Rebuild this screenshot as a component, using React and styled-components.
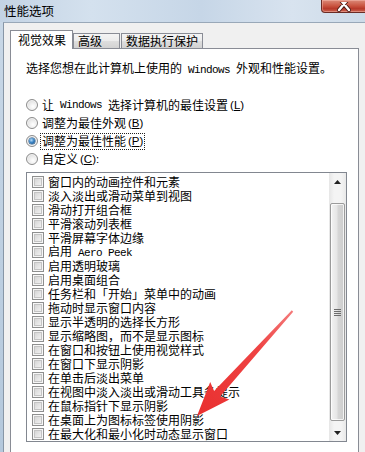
import React from 'react';
import styled, { createGlobalStyle } from 'styled-components';

const CJK = `"Noto Sans CJK SC", "Noto Sans", sans-serif`;

const GlobalStyle = createGlobalStyle`
  html, body { margin: 0; padding: 0; }
  body {
    width: 365px; height: 452px; overflow: hidden;
    background: #f0f0f0; color: #000;
    font-family: ${CJK};
  }
  #root { width: 365px; height: 452px; }
`;

const Window = styled.div`
  position: relative;
  width: 365px;
  height: 452px;
  display: flex;
  flex-direction: column;
  overflow: hidden;
  background: linear-gradient(180deg, #c9d8e7 0%, #b4c8dc 100%);
`;

const TitleBar = styled.div`
  flex: none;
  height: 22px;
  display: flex;
  justify-content: space-between;
  align-items: flex-start;
  background: linear-gradient(90deg, #c3d3e4 0%, #d4e1ee 25%, #c6d6e7 55%, #d8e3ef 80%, #cddbe8 100%);
`;

const Title = styled.div`
  padding-left: 4px;
  font-size: 12.5px;
  line-height: 21px;
  white-space: nowrap;
`;

const CloseButton = styled.div`
  box-sizing: border-box;
  width: 46px;
  height: 13px;
  margin-right: -2px;
  border: 1px solid #6b2c25;
  border-top: none;
  border-radius: 0 0 0 4px;
  background: linear-gradient(180deg, #dc8a78 0%, #c9533f 50%, #b7392a 72%, #cc6652 100%);
  box-shadow: inset 0 0 0 1px rgba(255, 205, 195, 0.4);
  display: flex;
  justify-content: center;
  align-items: flex-end;
`;

const Body = styled.div`
  flex: 1;
  min-height: 0;
  margin-left: 3px;
  border-left: 1px solid #8796a6;
  border-top: 1px solid #99a8b8;
  background: #f0f0f0;
  padding: 7px 6px 0 6px;
  display: flex;
  flex-direction: column;
`;

const TabStrip = styled.div`
  position: relative;
  z-index: 1;
  height: 19px;
  margin-bottom: -1px;
  display: flex;
  align-items: flex-end;
`;

const Tab = styled.div`
  box-sizing: border-box;
  width: ${(p) => p.$w}px;
  height: ${(p) => (p.$active ? 19 : 15)}px;
  margin-bottom: ${(p) => (p.$active ? 0 : 1)}px;
  margin-left: ${(p) => p.$ml || 0}px;
  border: 1px solid #898c95;
  border-bottom: none;
  background: ${(p) =>
    p.$active
      ? '#ffffff'
      : 'linear-gradient(180deg, #f4f4f4 0%, #ececec 48%, #dedede 52%, #d2d2d2 100%)'};
  padding-left: ${(p) => (p.$active ? 7 : 4)}px;
  padding-top: ${(p) => (p.$active ? 2 : 0)}px;
  font-size: 12px;
  line-height: 14px;
  white-space: nowrap;
`;

const Panel = styled.div`
  position: relative;
  z-index: 0;
  flex: 1;
  min-height: 0;
  background: #ffffff;
  border: 1px solid #898c95;
  border-bottom: none;
  padding: 12px 0 0 15px;
  display: flex;
  flex-direction: column;
`;

const Intro = styled.div`
  height: 14px;
  font-size: 12px;
  line-height: 14px;
  white-space: nowrap;
`;

const RadioGroup = styled.div`
  margin-top: 21px;
  display: flex;
  flex-direction: column;
`;

const RadioRow = styled.div`
  height: 18px;
  display: flex;
  align-items: center;
  gap: 4px;
  font-size: 12px;
  line-height: 14px;
  white-space: nowrap;
`;

const RadioCircle = styled.span`
  box-sizing: border-box;
  flex: none;
  width: 12px;
  height: 12px;
  border-radius: 50%;
  border: 1px solid #8c8c8c;
  background: radial-gradient(circle at 60% 65%, #ffffff 0%, #eeeeee 40%, #cfcfcf 100%);
  box-shadow: inset 0 0 0 1px #f4f4f4;
  display: flex;
  align-items: center;
  justify-content: center;
`;

const RadioDot = styled.span`
  width: 6px;
  height: 6px;
  border-radius: 50%;
  background: radial-gradient(circle at 40% 35%, #b9dcf7 0%, #3d86c6 45%, #0f3f72 100%);
  box-shadow: 0 0 0 0.5px #1b4f80;
`;

const Label = styled.span`
  display: inline-flex;
  align-items: center;
  height: 15px;
  outline: ${(p) => (p.$focus ? '1px dotted #222' : 'none')};
  padding: 0 ${(p) => (p.$focus ? 1 : 0)}px;
  margin-left: ${(p) => (p.$focus ? -1 : 0)}px;
`;

const Mono = styled.span`
  font-family: "Liberation Mono", "DejaVu Sans Mono", monospace;
  font-size: 11px;
  letter-spacing: -0.6px;
  white-space: pre;
`;

const Key = styled.span`
  font-family: "Liberation Sans", "Noto Sans", sans-serif;
  font-size: 11.5px;
  margin-left: 2px;
  u { text-underline-offset: 1px; }
`;

const ListBox = styled.div`
  box-sizing: border-box;
  margin-top: 4px;
  width: 321px;
  height: 270px;
  border: 1px solid #828790;
  display: flex;
  overflow: hidden;
`;

const Items = styled.div`
  flex: 1;
  padding: 2px 0 0 5px;
  display: flex;
  flex-direction: column;
`;

const CheckRow = styled.div`
  height: 14px;
  flex: none;
  display: flex;
  align-items: center;
  gap: 4px;
  font-size: 12px;
  line-height: 14px;
  white-space: nowrap;
`;

const CheckBox = styled.span`
  box-sizing: border-box;
  flex: none;
  width: 12px;
  height: 12px;
  border: 1px solid #8e8f8f;
  background: linear-gradient(135deg, #cdcdcd 0%, #e6e6e6 55%, #f8f8f8 100%);
  box-shadow: inset 0 0 0 1px #f6f6f6, inset 0 0 0 2px #c4c4c4;
`;

const ScrollBar = styled.div`
  flex: none;
  width: 17px;
  display: flex;
  flex-direction: column;
  background: linear-gradient(90deg, #e6e6e6 0%, #f4f4f4 30%, #f4f4f4 70%, #e9e9e9 100%);
`;

const ScrollArrow = styled.div`
  height: 17px;
  flex: none;
  display: flex;
  align-items: center;
  justify-content: center;
`;

const Track = styled.div`
  flex: 1;
  padding: 13px 1px 3px 1px;
  display: flex;
`;

const Thumb = styled.div`
  flex: 1;
  border: 1px solid #9b9b9b;
  border-radius: 2px;
  background: linear-gradient(90deg, #f3f3f3 0%, #e6e6e6 45%, #d6d6d6 55%, #cdcdcd 100%);
  box-shadow: inset 0 0 0 1px rgba(255, 255, 255, 0.75);
  display: flex;
  align-items: center;
  justify-content: center;
`;

const Overlay = styled.svg`
  position: absolute;
  left: 0;
  top: 0;
  width: 365px;
  height: 452px;
  pointer-events: none;
`;

const renderText = (s) =>
  s.split(/( ?[A-Za-z][A-Za-z ]*[A-Za-z] ?)/).map((part, i) =>
    /[A-Za-z]/.test(part) ? <Mono key={i}>{part}</Mono> : <React.Fragment key={i}>{part}</React.Fragment>
  );

const radios = [
  { text: '让 Windows 选择计算机的最佳设置', key: 'L' },
  { text: '调整为最佳外观', key: 'B' },
  { text: '调整为最佳性能', key: 'P', checked: true },
  { text: '自定义', key: 'C', colon: true },
];

const items = [
  '窗口内的动画控件和元素',
  '淡入淡出或滑动菜单到视图',
  '滑动打开组合框',
  '平滑滚动列表框',
  '平滑屏幕字体边缘',
  '启用 Aero Peek',
  '启用透明玻璃',
  '启用桌面组合',
  '任务栏和「开始」菜单中的动画',
  '拖动时显示窗口内容',
  '显示半透明的选择长方形',
  '显示缩略图，而不是显示图标',
  '在窗口和按钮上使用视觉样式',
  '在窗口下显示阴影',
  '在单击后淡出菜单',
  '在视图中淡入淡出或滑动工具条提示',
  '在鼠标指针下显示阴影',
  '在桌面上为图标标签使用阴影',
  '在最大化和最小化时动态显示窗口',
];

export default function App() {
  return (
    <>
      <GlobalStyle />
      <Window>
        <TitleBar>
          <Title>性能选项</Title>
          <CloseButton>
            <svg width="14" height="10" viewBox="0 0 14 10">
              <path d="M2 -4 L12 8 M12 -4 L2 8" stroke="#4a1a14" strokeWidth="4.2" strokeLinecap="round" />
              <path d="M2 -4 L12 8 M12 -4 L2 8" stroke="#ffffff" strokeWidth="2.4" strokeLinecap="round" />
            </svg>
          </CloseButton>
        </TitleBar>
        <Body>
          <TabStrip>
            <Tab $active $w={63}>视觉效果</Tab>
            <Tab $w={47}>高级</Tab>
            <Tab $w={82} $ml={1}>数据执行保护</Tab>
          </TabStrip>
          <Panel>
            <Intro>{renderText('选择您想在此计算机上使用的 Windows 外观和性能设置。')}</Intro>
            <RadioGroup>
              {radios.map((r) => (
                <RadioRow key={r.key}>
                  <RadioCircle>{r.checked && <RadioDot />}</RadioCircle>
                  <Label $focus={r.checked}>
                    {renderText(r.text)}
                    <Key>
                      (<u>{r.key}</u>){r.colon ? ':' : ''}
                    </Key>
                  </Label>
                </RadioRow>
              ))}
            </RadioGroup>
            <ListBox>
              <Items>
                {items.map((t) => (
                  <CheckRow key={t}>
                    <CheckBox />
                    <span>{renderText(t)}</span>
                  </CheckRow>
                ))}
              </Items>
              <ScrollBar>
                <ScrollArrow>
                  <svg width="7" height="4" viewBox="0 0 7 4">
                    <path d="M0 4 L3.5 0 L7 4 Z" fill="#222" />
                  </svg>
                </ScrollArrow>
                <Track>
                  <Thumb>
                    <svg width="7" height="7" viewBox="0 0 7 7">
                      <path d="M0 0.5 H7 M0 2.5 H7 M0 4.5 H7 M0 6.5 H7" stroke="#6c6c6c" strokeWidth="1" />
                    </svg>
                  </Thumb>
                </Track>
                <ScrollArrow>
                  <svg width="7" height="4" viewBox="0 0 7 4">
                    <path d="M0 0 L3.5 4 L7 0 Z" fill="#222" />
                  </svg>
                </ScrollArrow>
              </ScrollBar>
            </ListBox>
          </Panel>
        </Body>
        <Overlay viewBox="0 0 365 452">
          <defs>
            <linearGradient id="arrowGrad" x1="293" y1="311" x2="197" y2="416" gradientUnits="userSpaceOnUse">
              <stop offset="0" stopColor="#f47a7a" />
              <stop offset="0.35" stopColor="#ef4444" />
              <stop offset="1" stopColor="#e92f2f" />
            </linearGradient>
          </defs>
          <polygon
            points="197,416 229.4,399.4 220.1,396.4 293.2,311.7 291.8,310.3 214.1,391 210.2,382"
            fill="url(#arrowGrad)"
          />
        </Overlay>
      </Window>
    </>
  );
}
